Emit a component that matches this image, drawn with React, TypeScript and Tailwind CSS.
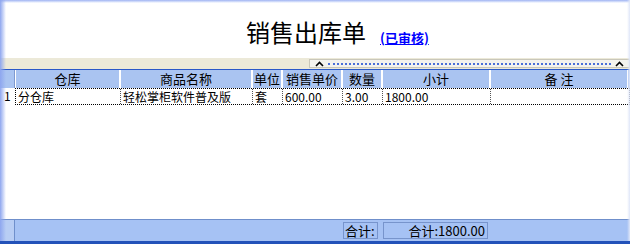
import React from 'react';

const cols = [
  { key: 'wh', label: '仓库', w: 'w-[105px]' },
  { key: 'name', label: '商品名称', w: 'w-[132px]' },
  { key: 'unit', label: '单位', w: 'w-[30px]' },
  { key: 'price', label: '销售单价', w: 'w-[60px]' },
  { key: 'qty', label: '数量', w: 'w-[40px]' },
  { key: 'sub', label: '小计', w: 'w-[108px]' },
  { key: 'note', label: '备 注', w: 'w-[138px]' },
];

const rows = [
  { wh: '分仓库', name: '轻松掌柜软件普及版', unit: '套', price: '600.00', qty: '3.00', sub: '1800.00', note: '' },
];

const Caret = () => (
  <svg width="9" height="6" viewBox="0 0 9 6" className="shrink-0">
    <path d="M1 5 L4.5 1.5 L8 5" stroke="#000" strokeWidth="1.6" fill="none" />
  </svg>
);

export default function App() {
  return (
    <div className="relative w-[630px] h-[244px] bg-white flex flex-col overflow-hidden text-[12px] text-black font-['SimSun','Noto_Sans_CJK_SC',sans-serif]">
      {/* window frame shading */}
      <div className="absolute left-0 top-0 bottom-[3px] w-[6px] bg-gradient-to-r from-[#8ea6ef] to-transparent pointer-events-none z-10" />
      <div className="absolute right-0 top-0 bottom-[3px] w-[3px] bg-gradient-to-l from-[#dfe6f8] to-transparent pointer-events-none z-10" />
      <div className="h-[3px] bg-gradient-to-b from-[#9fb3f2] to-white shrink-0" />

      <div className="h-[55px] flex items-start pl-[246px] pt-[14px] shrink-0">
        <span className="text-[24px] leading-[30px] font-normal">销售出库单</span>
        <span className="ml-[14px] mt-[13px] text-[13px] leading-[16px] font-bold text-[#0000ff] underline">(已审核)</span>
      </div>

      <div className="h-[11px] bg-[#ece9d8] flex justify-end shrink-0">
        <div className="w-[321px] h-[9px] mt-[1px] bg-[#f4f3ee] border border-[#c9c7ba] flex items-center px-[5px] gap-[4px]">
          <Caret />
          <div className="flex-1 border-t-2 border-dotted border-[#4a6fd8] h-0" />
          <Caret />
        </div>
      </div>

      <div className="border-t border-[#2a58c8] flex h-[19px] bg-[#aac4f1] shrink-0">
        <div className="w-[15px] border-r border-[#7f9ad0] shrink-0" />
        {cols.map(c => (
          <div key={c.key} className={`${c.w} shrink-0 border-l border-white border-r border-[#7f9ad0] flex items-center justify-center text-[13px] leading-[18px]`}>
            {c.label}
          </div>
        ))}
      </div>

      {rows.map((r, i) => (
        <div key={i} className="flex h-[17px] shrink-0">
          <div className="w-[15px] shrink-0 pl-[4px] leading-[16px] text-[12px]">{i + 1}</div>
          <div className="flex border border-dotted border-black h-[17px]">
            {cols.map(c => (
              <div key={c.key} className={`${c.w} shrink-0 border-r border-dotted border-[#555] px-[2px] leading-[15px] text-[12px] whitespace-nowrap last:border-r-0`}>
                {(r as Record<string, string>)[c.key]}
              </div>
            ))}
          </div>
        </div>
      ))}

      <div className="flex-1" />

      <div className="h-[22px] bg-[#a6c2f4] border-t border-[#6f8fcb] flex items-center shrink-0">
        <div className="w-[15px] h-full border-r border-[#6f8fcb] bg-[#b8cdf4]" />
        <div className="flex-1 flex justify-start pl-[328px] gap-[5px]">
          <div className="w-[35px] h-[17px] border border-[#7794cc] leading-[15px] text-[13px] pl-[1px]">合计:</div>
          <div className="w-[105px] h-[17px] border border-[#7794cc] leading-[15px] text-[13px] text-right pr-[2px]">合计:1800.00</div>
        </div>
      </div>
      <div className="h-[3px] bg-[#2352b9] shrink-0" />
    </div>
  );
}
